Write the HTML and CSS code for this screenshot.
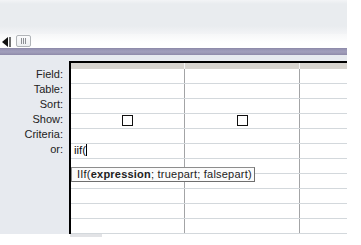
FILE: index.html
```html
<!DOCTYPE html>
<html>
<head>
<meta charset="utf-8">
<link rel="stylesheet" href="styles.css">
</head>
<body>
<div class="app">
  <div class="toolbar"></div>
  <div class="hscroll">
    <div class="arrow-btn"><span class="tri"></span><span class="edge"></span></div>
    <div class="thumb"><span></span><span></span><span></span></div>
  </div>
  <div class="band"></div>
  <div class="designer">
    <div class="labels">
      <div class="label">Field:</div>
      <div class="label">Table:</div>
      <div class="label">Sort:</div>
      <div class="label">Show:</div>
      <div class="label">Criteria:</div>
      <div class="label">or:</div>
    </div>
    <div class="gridwrap">
      <div class="grid">
        <div class="row head"><div class="cell c1"></div><div class="cell c2"></div><div class="cell c3"></div></div>
        <div class="row"><div class="cell c1"></div><div class="cell c2"></div><div class="cell c3"></div></div>
        <div class="row"><div class="cell c1"></div><div class="cell c2"></div><div class="cell c3"></div></div>
        <div class="row"><div class="cell c1"></div><div class="cell c2"></div><div class="cell c3"></div></div>
        <div class="row"><div class="cell c1 center"><span class="check"></span></div><div class="cell c2 center"><span class="check"></span></div><div class="cell c3"></div></div>
        <div class="row"><div class="cell c1"></div><div class="cell c2"></div><div class="cell c3"></div></div>
        <div class="row"><div class="cell c1 text">iif(<span class="caret"></span></div><div class="cell c2"></div><div class="cell c3"></div></div>
        <div class="row"><div class="cell c1"></div><div class="cell c2"></div><div class="cell c3"></div></div>
        <div class="row"><div class="cell c1"></div><div class="cell c2"></div><div class="cell c3"></div></div>
        <div class="row"><div class="cell c1"></div><div class="cell c2"></div><div class="cell c3"></div></div>
        <div class="row"><div class="cell c1"></div><div class="cell c2"></div><div class="cell c3"></div></div>
        <div class="row"><div class="cell c1"></div><div class="cell c2"></div><div class="cell c3"></div></div>
      </div>
      <div class="tip">IIf(<b>expression</b>; truepart; falsepart)</div>
    </div>
  </div>
  <div class="footer"><div class="stub"></div></div>
</div>
</body>
</html>
```
FILE: styles.css
```css
html, body {
  margin: 0;
  padding: 0;
  background: #ffffff;
}
body {
  width: 361px;
  height: 245px;
  overflow: hidden;
  font-family: "Liberation Sans", Arial, sans-serif;
  font-size: 11px;
  color: #1e1e1e;
}
.app {
  width: 347px;
}
.toolbar {
  height: 34px;
  background: linear-gradient(to bottom, #f3f4f6 0, #e9ecef 4px, #e9ecef 26px, #f3f4f6 34px);
}
.hscroll {
  height: 14px;
  display: flex;
  align-items: flex-start;
  background: linear-gradient(to bottom, #f6f7f8 0, #ffffff 9px);
}
.arrow-btn {
  display: flex;
  align-items: center;
  height: 10px;
  margin-top: 3px;
  padding-left: 2px;
  gap: 1px;
}
.tri {
  width: 0;
  height: 0;
  border-right: 6px solid #111;
  border-top: 5px solid transparent;
  border-bottom: 5px solid transparent;
}
.edge {
  width: 2px;
  height: 10px;
  background: #6f6f6f;
}
.thumb {
  margin-top: 1px;
  margin-left: 5px;
  width: 15px;
  height: 12px;
  box-sizing: border-box;
  border: 1px solid #b1b4b8;
  border-radius: 2px;
  background: linear-gradient(to bottom, #fbfbfc, #eef0f2);
  display: flex;
  justify-content: center;
  align-items: center;
  gap: 1px;
}
.thumb span {
  width: 1px;
  height: 6px;
  background: #8c8f94;
}
.band {
  height: 7px;
  background: linear-gradient(to bottom, #8c88a8 0, #9b98b6 2px, #a29fbb 4px, #8e8aa9 7px);
}
.designer {
  display: flex;
  background: #e7eaef;
}
.labels {
  width: 69px;
  padding-top: 14px;
  box-sizing: border-box;
  padding-right: 6px;
}
.label {
  height: 15px;
  line-height: 11px;
  text-align: right;
  color: #222;
}
.gridwrap {
  position: relative;
  padding-top: 6px;
  width: 278px;
}
.grid {
  border-top: 2px solid #000;
  border-left: 2px solid #000;
  background: #fff;
}
.row {
  display: flex;
  height: 15px;
  box-sizing: border-box;
  border-bottom: 1px solid #d3d8dc;
}
.row.head {
  height: 6px;
  border-bottom: 0;
  background: #d7d4cf;
}
.cell {
  box-sizing: border-box;
  height: 100%;
}
.c1 {
  width: 114px;
  border-right: 1px solid #a3a4a6;
}
.c2 {
  width: 115px;
  border-right: 1px solid #a3a4a6;
}
.c3 {
  width: 47px;
}
.head .c1, .head .c2 {
  border-right: 1px solid #f4f4f4;
}
.center {
  display: flex;
  justify-content: center;
  align-items: flex-start;
}
.check {
  display: block;
  width: 11px;
  height: 11px;
  margin-top: 1px;
  box-sizing: border-box;
  border: 1px solid #111;
  background: #fff;
}
.text {
  padding-left: 3px;
  line-height: 12px;
  font-size: 11.5px;
  color: #111;
  display: flex;
  align-items: flex-start;
}
.caret {
  display: inline-block;
  width: 1px;
  height: 12px;
  background: #000;
  margin-left: 0;
}
.tip {
  position: absolute;
  left: 2px;
  top: 112px;
  width: 184px;
  height: 15px;
  box-sizing: border-box;
  border: 1px solid #8d8d8d;
  border-right-color: #6f6f6f;
  border-bottom-color: #6f6f6f;
  background: #fbfbfb;
  padding-left: 5px;
  line-height: 13px;
  letter-spacing: 0.22px;
  white-space: nowrap;
  color: #222;
}
.tip b {
  font-weight: bold;
}
.footer {
  height: 11px;
  padding-left: 70px;
}
.stub {
  width: 32px;
  height: 3px;
  background: #e2e3e6;
}
```
